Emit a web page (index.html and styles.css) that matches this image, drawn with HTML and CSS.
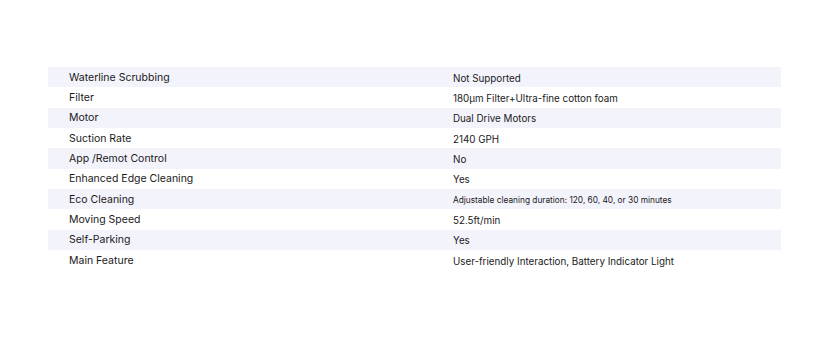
FILE: index.html
```html
<!DOCTYPE html>
<html>
<head>
<meta charset="utf-8">
<link rel="stylesheet" href="styles.css">
</head>
<body>
<div class="page">
  <div class="specs">
    <div class="row shade"><div class="k">Waterline Scrubbing</div><div class="v">Not Supported</div></div>
    <div class="row"><div class="k">Filter</div><div class="v">180μm Filter+Ultra-fine cotton foam</div></div>
    <div class="row shade"><div class="k">Motor</div><div class="v">Dual Drive Motors</div></div>
    <div class="row"><div class="k">Suction Rate</div><div class="v">2140 GPH</div></div>
    <div class="row shade"><div class="k">App /Remot Control</div><div class="v">No</div></div>
    <div class="row"><div class="k">Enhanced Edge Cleaning</div><div class="v">Yes</div></div>
    <div class="row shade"><div class="k">Eco Cleaning</div><div class="v small">Adjustable cleaning duration: 120, 60, 40, or 30 minutes</div></div>
    <div class="row"><div class="k">Moving Speed</div><div class="v">52.5ft/min</div></div>
    <div class="row shade"><div class="k">Self-Parking</div><div class="v">Yes</div></div>
    <div class="row"><div class="k">Main Feature</div><div class="v">User-friendly Interaction, Battery Indicator Light</div></div>
  </div>
</div>
</body>
</html>
```
FILE: styles.css
```css
html, body { margin: 0; padding: 0; background: #fff; }
.page { padding: 67px 47px 0 48px; font-family: Inter, "Noto Sans", sans-serif; color: #1a1a1a; }
.specs { display: flex; flex-direction: column; }
.row { display: grid; grid-template-columns: 405px 1fr; height: 20.35px; align-items: center; font-size: 10.5px; }
.shade { background: #f3f3fc; }
.k { padding-left: 21px; }
.v { font-size: 9.8px; padding-top: 2px; }
.v.small { font-size: 8.3px; }
```
